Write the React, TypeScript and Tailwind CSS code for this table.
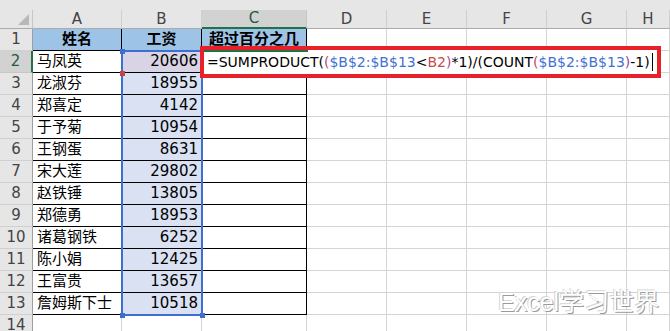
import React from 'react'

const rows: [string, number][] = [
  ['马凤英', 20606],
  ['龙淑芬', 18955],
  ['郑喜定', 4142],
  ['于予菊', 10954],
  ['王钢蛋', 8631],
  ['宋大莲', 29802],
  ['赵铁锤', 13805],
  ['郑德勇', 18953],
  ['诸葛钢铁', 6252],
  ['陈小娟', 12425],
  ['王富贵', 13657],
  ['詹姆斯下士', 10518],
]

const letters = ['A', 'B', 'C', 'D', 'E', 'F', 'G', 'H']

const font = { fontFamily: '"DejaVu Sans", "Noto Sans CJK SC", sans-serif' }

function ColHeader({ label }: { label: string }) {
  const selected = label === 'C'
  return (
    <div
      className={
        selected
          ? 'flex items-center justify-center bg-[#d2d2d2] border-r border-[#c6c6c6] border-b-2 border-b-[#217346] text-[15px] text-[#1e5e3a]'
          : 'flex items-center justify-center bg-[#e6e6e6] border-r border-[#cfcfcf] border-b border-b-[#ababab] text-[15px] text-[#444]'
      }
    >
      {label}
    </div>
  )
}

function RowHeader({ n }: { n: number }) {
  return (
    <div
      className={
        n === 2
          ? 'flex items-center justify-center bg-[#d2d2d2] border-b border-[#c6c6c6] border-r-2 border-r-[#217346] text-[15px] text-[#1e5e3a]'
          : 'flex items-center justify-center bg-[#e6e6e6] border-b border-[#d0d0d0] border-r border-r-[#9e9e9e] text-[15px] text-[#444]'
      }
    >
      {n}
    </div>
  )
}

function Cell({ r, c }: { r: number; c: number }) {
  // c: 1 = A, 2 = B, ...
  const inTable = r <= 13 && c <= 3
  let cls = inTable
    ? 'flex items-center border-r border-b border-black text-[15px] text-black overflow-hidden whitespace-nowrap'
    : 'flex items-center border-r border-b border-[#d4d4d4] text-[15px] text-black overflow-hidden whitespace-nowrap'
  let text: React.ReactNode = null

  if (r === 1 && c <= 3) {
    cls += ' bg-[#9dc3e6] font-bold justify-center'
    text = ['姓名', '工资', '超过百分之几'][c - 1]
  } else if (r >= 2 && r <= 13 && c === 1) {
    cls += ' bg-white pl-[4px]'
    text = rows[r - 2][0]
  } else if (r >= 2 && r <= 13 && c === 2) {
    cls += r === 2 ? ' bg-[#d8d3e5] justify-end pr-[3px]' : ' bg-[#d9e1f2] justify-end pr-[3px]'
    text = rows[r - 2][1]
  } else {
    cls += ' bg-white'
  }

  return <div className={cls}>{text}</div>
}

function Handle({ className }: { className: string }) {
  return <div className={'absolute w-[5px] h-[5px] ' + className} />
}

export default function App() {
  const body: React.ReactNode[] = []
  for (let r = 1; r <= 14; r++) {
    body.push(<RowHeader key={'h' + r} n={r} />)
    for (let c = 1; c <= 8; c++) body.push(<Cell key={r + '-' + c} r={r} c={c} />)
  }

  return (
    <div className="relative w-[670px] h-[331px] overflow-hidden bg-white" style={font}>
      <div className="grid grid-cols-[33px_89px_80px_105px_80px_80px_80px_80px_43px] grid-rows-[10px_19px_repeat(14,22px)]">
        <div className="col-span-9 bg-[#e6e6e6]" />
        <div className="relative bg-[#e6e6e6] border-r border-[#c6c6c6] border-b border-b-[#ababab]">
          <div className="absolute right-[3px] bottom-[3px] w-0 h-0 border-l-[11px] border-l-transparent border-b-[11px] border-b-[#b8b8b8]" />
        </div>
        {letters.map((l) => (
          <ColHeader key={l} label={l} />
        ))}
        {body}
      </div>

      {/* formula range $B$2:$B$13 */}
      <div className="absolute left-[121px] top-[50px] w-[82px] h-[266px] border-2 border-[#3d6fd0]" />
      <Handle className="left-[120px] top-[49px] bg-[#3d6fd0]" />
      <Handle className="left-[120px] top-[71px] bg-[#c8404a]" />
      <Handle className="left-[120px] top-[313px] bg-[#3d6fd0]" />
      <Handle className="left-[200px] top-[313px] bg-[#3d6fd0]" />

      {/* edit box for C2 */}
      <div className="absolute left-[202px] top-[50px] w-[456px] h-[24px] bg-white flex items-center pl-[5px] text-[14px] whitespace-nowrap">
        <span className="text-black">=SUMPRODUCT(</span>
        <span className="text-[#c2476f]">(</span>
        <span className="text-[#3f70d2]">$B$2:$B$13</span>
        <span className="text-black">&lt;</span>
        <span className="text-[#c94a4a]">B2</span>
        <span className="text-[#b04a86]">)</span>
        <span className="text-black">*1)/(COUNT</span>
        <span className="text-[#c2476f]">(</span>
        <span className="text-[#3f70d2]">$B$2:$B$13</span>
        <span className="text-[#8a4f9e]">)</span>
        <span className="text-black">-1)</span>
        <span className="ml-[2px] w-px h-[18px] bg-black" />
      </div>
      <div className="absolute left-[202px] top-[50px] w-[106px] h-[24px] border-t-2 border-l-2 border-[#217346]" />

      {/* annotation */}
      <div className="absolute left-[200px] top-[46px] w-[461px] h-[32px] border-4 border-[#e8202a]" />

      {/* watermark */}
      <div
        className="absolute left-[498px] top-[290px] text-[25px] leading-none text-white [text-shadow:1px_1px_0_#9a9a9a,-1px_-1px_0_#d6d6d6]"
        style={{ fontFamily: '"Liberation Sans", "Noto Sans CJK SC", sans-serif' }}
      >
        Excel学习世界
      </div>
    </div>
  )
}
